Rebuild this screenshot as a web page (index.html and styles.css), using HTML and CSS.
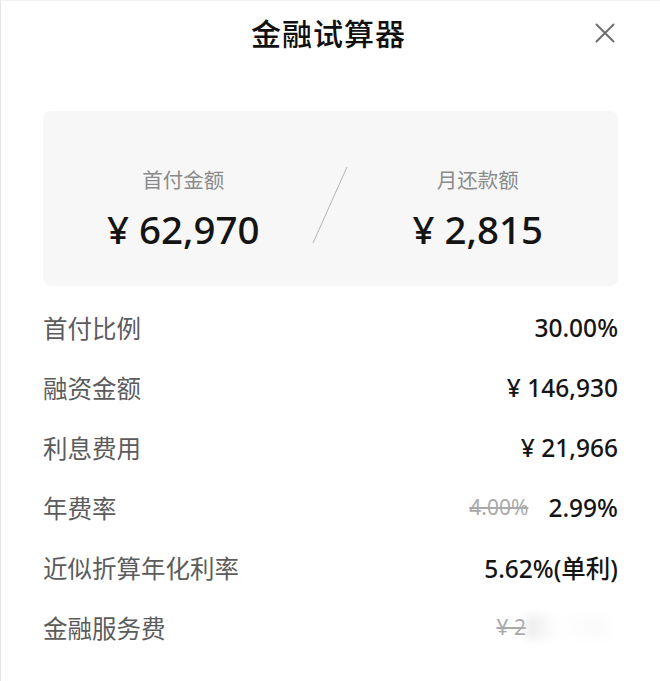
FILE: index.html
```html
<!DOCTYPE html>
<html lang="zh-CN">
<head>
<meta charset="utf-8">
<title>金融试算器</title>
<link rel="stylesheet" href="styles.css">
</head>
<body>
<div class="page">
  <header class="header">
    <h1 class="title">金融试算器</h1>
    <button class="close" aria-label="关闭">
      <svg viewBox="0 0 20 20" width="20" height="20"><path d="M1.5 1.5 L18.5 18.5 M18.5 1.5 L1.5 18.5" stroke="#6f6f6f" stroke-width="2" fill="none" stroke-linecap="round"/></svg>
    </button>
  </header>

  <section class="card">
    <div class="stat">
      <div class="stat-label">首付金额</div>
      <div class="stat-value">¥ 62,970</div>
    </div>
    <div class="stat">
      <div class="stat-label">月还款额</div>
      <div class="stat-value">¥ 2,815</div>
    </div>
    <svg class="slash" viewBox="0 0 36 78" width="36" height="78"><path d="M35 1 L1 77" stroke="#b5b5b5" stroke-width="1" fill="none"/></svg>
  </section>

  <ul class="rows">
    <li class="row"><span class="label">首付比例</span><span class="value">30.00%</span></li>
    <li class="row"><span class="label">融资金额</span><span class="value">¥ 146,930</span></li>
    <li class="row"><span class="label">利息费用</span><span class="value">¥ 21,966</span></li>
    <li class="row"><span class="label">年费率</span><span class="value"><s class="old">4.00%</s><span>2.99%</span></span></li>
    <li class="row"><span class="label">近似折算年化利率</span><span class="value">5.62%(单利)</span></li>
    <li class="row"><span class="label">金融服务费</span><span class="value faded"><s class="old">¥ 2</s><span class="ghost"></span></span></li>
  </ul>
</div>
</body>
</html>
```

FILE: styles.css
```css
* { box-sizing: border-box; }
html, body {
  margin: 0;
  padding: 0;
  background: #ffffff;
}
body {
  font-family: "Noto Sans", "Noto Sans CJK SC", sans-serif;
  color: #111111;
}
.page {
  width: 660px;
  height: 681px;
  border-left: 1px solid #e4e4e4;
  border-top: 1px solid #f0f0f0;
  padding: 0 42px 0 42px;
  overflow: hidden;
}
.header {
  position: relative;
  height: 69px;
  padding-bottom: 7px;
  display: flex;
  align-items: center;
  justify-content: center;
}
.title {
  margin: 0 0 0 -4px;
  font-family: "Noto Sans CJK SC", sans-serif;
  font-size: 30px;
  font-weight: 500;
  letter-spacing: 1px;
  color: #111;
  line-height: 1;
}
.close {
  position: absolute;
  right: 2px;
  top: 21px;
  width: 22px;
  height: 22px;
  padding: 0;
  border: 0;
  background: none;
  display: flex;
  align-items: center;
  justify-content: center;
}
.card {
  position: relative;
  margin-top: 41px;
  height: 175px;
  background: #f7f7f7;
  border-radius: 8px;
  display: grid;
  grid-template-columns: 1fr 1fr;
  column-gap: 14px;
}
.stat {
  display: flex;
  flex-direction: column;
  align-items: center;
  padding-top: 54px;
}
.stat-label {
  font-family: "Noto Sans CJK SC", sans-serif;
  font-size: 20.5px;
  color: #8a8a8a;
  line-height: 28px;
}
.stat-value {
  margin-top: 13px;
  font-size: 38.5px;
  font-weight: 500;
  line-height: 46px;
  color: #141414;
}
.slash {
  position: absolute;
  left: 269px;
  top: 55px;
}
.rows {
  list-style: none;
  margin: 11px 0 0;
  padding: 0;
}
.row {
  height: 60px;
  display: flex;
  align-items: center;
  justify-content: space-between;
}
.label {
  font-family: "Noto Sans CJK SC", sans-serif;
  font-size: 24.5px;
  color: #5c5c5c;
}
.value {
  font-family: "Noto Sans", "Noto Sans CJK SC", sans-serif;
  font-size: 24.5px;
  font-weight: 500;
  color: #151515;
  display: flex;
  align-items: center;
  gap: 20px;
}
.old {
  font-size: 21px;
  font-weight: 400;
  color: #a9a9a9;
}
.faded {
  gap: 0;
}
.ghost {
  display: block;
  width: 92px;
  height: 24px;
  background: linear-gradient(90deg, rgba(220,220,220,0.6), rgba(255,255,255,0) 35%, rgba(248,248,248,0.7) 75%, rgba(255,255,255,0));
  filter: blur(4px);
}
```
